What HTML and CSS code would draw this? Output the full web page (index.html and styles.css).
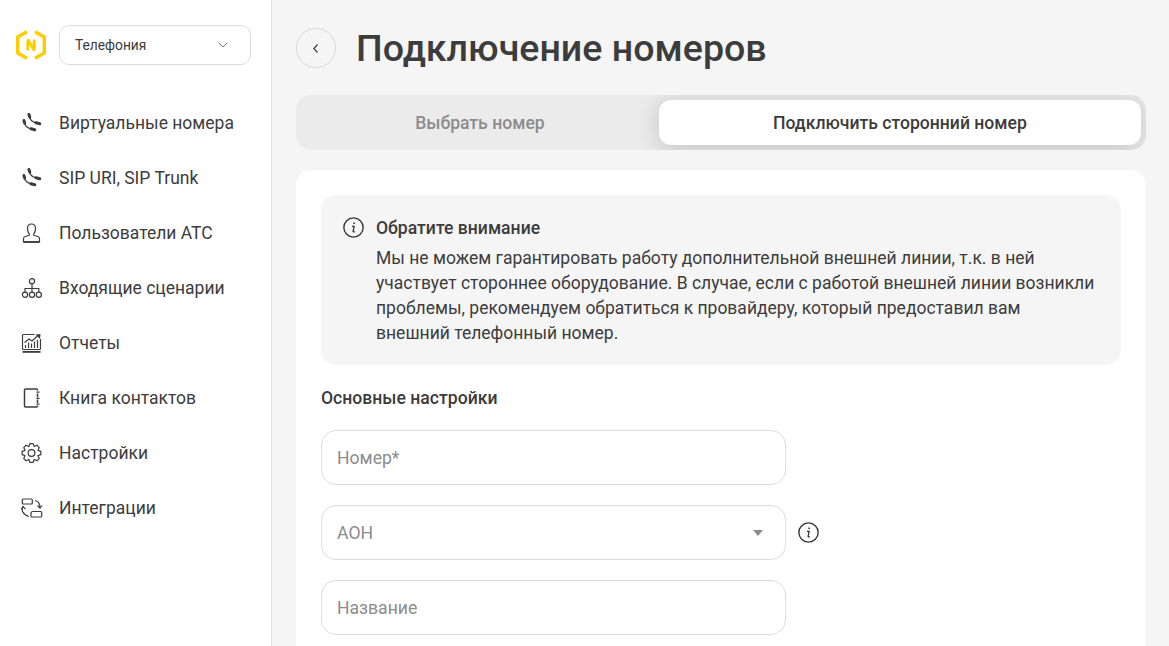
FILE: index.html
```html
<!DOCTYPE html>
<html lang="ru">
<head>
<meta charset="utf-8">
<title>Подключение номеров</title>
<link rel="stylesheet" href="styles.css">
</head>
<body>
<div class="app">
  <aside class="sidebar">
    <div class="brand">
      <svg class="logo" width="30" height="30" viewBox="0 0 30 30" fill="none">
        <path d="M11 1.700 1.700 7v16l9.300 5.300M19 1.700 28.300 7v16L19 28.300" stroke="#fc0" stroke-width="3.400" stroke-linejoin="round"/>
        <path d="M11.800 20.500v-11l6.400 11v-11" stroke="#fc0" stroke-width="2.800" stroke-linejoin="bevel"/>
      </svg>
      <div class="product">
        <span>Телефония</span>
        <svg width="10" height="6" viewBox="0 0 10 6" fill="none"><path d="M.7.7 5 5 9.300.7" stroke="#777" stroke-width="1"/></svg>
      </div>
    </div>
    <nav class="nav">
      <a class="nav-item">
        <svg class="ico" viewBox="0 0 20 20"><path class="phone-arc" d="M8 3.500C8.500 6.500 10.500 9 14.500 9.800M3 9.500c.5 3 2.500 5.500 6.500 6.300"/><path class="blob" d="m7.400 1.500.9 2.600M14.500 9.800l3.800 1M2.400 7.500l.8 2.600M9.500 15.800l3.800 1"/></svg>
        <span>Виртуальные номера</span>
      </a>
      <a class="nav-item">
        <svg class="ico" viewBox="0 0 20 20"><path class="phone-arc" d="M8 3.500C8.500 6.500 10.500 9 14.500 9.800M3 9.500c.5 3 2.500 5.500 6.500 6.300"/><path class="blob" d="m7.400 1.500.9 2.600M14.500 9.800l3.800 1M2.400 7.500l.8 2.600M9.500 15.800l3.800 1"/></svg>
        <span>SIP URI, SIP Trunk</span>
      </a>
      <a class="nav-item">
        <svg class="ico" viewBox="0 0 20 20"><path class="line" d="M2 19v-3.500c0-1 .7-1.700 1.800-2l3.400-1c.6-.2.800-.7.600-1.300C6.600 9.700 6 7.800 6 5.600 6 2.800 7.700 1 10 1s4 1.800 4 4.600c0 2.200-.6 4.100-1.800 5.600-.2.600 0 1.100.6 1.300l3.400 1c1.100.3 1.800 1 1.800 2V19z"/><path class="heavy" d="M2 19h16"/></svg>
        <span>Пользователи АТС</span>
      </a>
      <a class="nav-item">
        <svg class="ico" viewBox="0 0 20 20"><circle class="line" cx="10.500" cy="3.200" r="2.600"/><circle class="line" cx="3.500" cy="16.800" r="2.600"/><circle class="line" cx="10.500" cy="16.800" r="2.600"/><circle class="line" cx="17.300" cy="16.800" r="2.600"/><path class="line" d="M10.500 5.800v8.400M3.500 14.200v-3.700h13.800v3.700"/></svg>
        <span>Входящие сценарии</span>
      </a>
      <a class="nav-item">
        <svg class="ico" viewBox="0 0 20 20"><path class="line" d="M13 1.500H2c-.6 0-1 .4-1 1v13c0 .6.400 1 1 1h16c.6 0 1-.4 1-1V6"/><path class="heavy" d="M1 18.900h18"/><path class="line" d="M3 9.500 7.500 6l3 2L16.500 2.500"/><path class="solid" d="m14 1.500 5-.5-.5 5z"/><path class="line" d="M4 15v-3M7 15V9.500M10 15v-4.500M13 15V8.500M16 15V7"/></svg>
        <span>Отчеты</span>
      </a>
      <a class="nav-item">
        <svg class="ico" viewBox="0 0 20 20"><path class="heavy-line" d="M16 2.500V2c0-.6-.4-1-1-1H4c-.6 0-1 .4-1 1v16c0 .6.400 1 1 1h11c.6 0 1-.4 1-1v-.5M16 5.500v3.700M16 11.500v3.500"/><path class="line" d="M15 4.200h3M15 10.300h3M15 16.200h3"/></svg>
        <span>Книга контактов</span>
      </a>
      <a class="nav-item">
        <svg class="ico" viewBox="0 0 20 20"><circle class="line" cx="10" cy="10" r="3.400"/><path class="line round" d="M8.350.64h3.300l1.030 2.890 2.770-1.310 2.330 2.330-1.310 2.770 2.890 1.030v3.300l-2.890 1.030 1.310 2.770-2.330 2.330-2.770-1.310-1.030 2.890h-3.300l-1.030-2.890-2.770 1.310-2.330-2.330 1.310-2.770-2.890-1.030v-3.300l2.890-1.030-1.310-2.770 2.330-2.330 2.770 1.310z"/></svg>
        <span>Настройки</span>
      </a>
      <a class="nav-item">
        <svg class="ico ico-wide" viewBox="0 0 22 20"><path class="line" d="M2.800 1h8c.6 0 1 .4 1 1v3c0 .6-.4 1-1 1h-8c-.6 0-1-.4-1-1V2c0-.6.400-1 1-1zM12.500 13.500h7.700c.6 0 1 .4 1 1V18c0 .6-.4 1-1 1H11.500c-.6 0-1-.4-1-1v-2.500c0-1.100.9-2 2-2z"/><path class="line" d="M14.500 2.500c3 .8 5 3.300 5 7M2.500 8.500c-1.800 3.500-.7 8 5.800 10"/><path class="line" d="m.7 11.500 1.800-3 2.500 2.700M17 7.500l2.500 2.500L21.500 7.500"/></svg>
        <span>Интеграции</span>
      </a>
    </nav>
  </aside>
  <main class="main">
    <header class="page-head">
      <button class="back" type="button" aria-label="Назад">
        <svg width="5" height="9" viewBox="0 0 5 9" fill="none"><path d="M4.500.5.800 4.500l3.700 4" stroke="#3c3c3c" stroke-width="1.200"/></svg>
      </button>
      <h1>Подключение номеров</h1>
    </header>
    <div class="tabs">
      <div class="tab">Выбрать номер</div>
      <div class="tab tab-active">Подключить сторонний номер</div>
    </div>
    <section class="card">
      <div class="notice">
        <div class="notice-head">
          <svg class="info" viewBox="0 0 20 20" fill="none"><use href="#info-glyph"/></svg>
          <strong>Обратите внимание</strong>
        </div>
        <p>Мы не можем гарантировать работу дополнительной внешней линии, т.к. в ней<br>участвует стороннее оборудование. В случае, если с работой внешней линии возникли<br>проблемы, рекомендуем обратиться к провайдеру, который предоставил вам<br>внешний телефонный номер.</p>
      </div>
      <h2>Основные настройки</h2>
      <div class="form">
        <div class="row"><div class="field">Номер*</div></div>
        <div class="row">
          <div class="field field-select">АОН<i class="caret"></i></div>
          <svg class="info" viewBox="0 0 20 20" fill="none"><use href="#info-glyph"/></svg>
        </div>
        <div class="row"><div class="field">Название</div></div>
      </div>
    </section>
  </main>
</div>
<svg width="0" height="0" class="defs">
  <defs>
    <g id="info-glyph">
      <circle cx="10" cy="10" r="9.200" stroke="#333" stroke-width="1.300"/>
      <path d="M10.600 5.300v1.300" stroke="#333" stroke-width="1.500"/>
      <path d="M8.600 9h2l-1 4.600c-.1.700.7.800 1.600.1" stroke="#333" stroke-width="1.200" fill="none"/>
    </g>
  </defs>
</svg>
</body>
</html>
```

FILE: styles.css
```css
* { box-sizing: border-box; }
html, body { margin: 0; height: 100%; }
body { font-family: Roboto, "Noto Sans", sans-serif; color: #3c3c3c; background: #f5f5f5; overflow: hidden; }
.defs { position: absolute; }
.app { display: flex; height: 646px; overflow: hidden; }

.sidebar { flex: 0 0 272px; background: #fff; border-right: 1px solid #e2e2e2; padding: 25px 20px 0 16px; }
.brand { display: flex; align-items: center; gap: 13px; }
.logo { flex: none; }
.product { flex: 1; height: 40px; border: 1px solid #dcdcdc; border-radius: 10px; display: flex; align-items: center; justify-content: space-between; padding: 0 22px 0 15px; font-size: 13.750px; color: #3c3c3c; }

.nav { display: flex; flex-direction: column; margin-top: 30px; margin-left: -1px; }
.nav-item { display: flex; align-items: center; height: 55px; gap: 17px; padding-left: 6px; font-size: 17.500px; color: #3c3c3c; }
.ico { flex: none; width: 21px; height: 20px; fill: none; overflow: visible; }
.ico-wide { margin-left: -1px; margin-right: -1px; width: 23px; }
.line { fill: none; stroke: #3c3c3c; stroke-width: 1.200; }
.phone-arc { fill: none; stroke: #3c3c3c; stroke-width: 1.500; }
.heavy-line { fill: none; stroke: #3c3c3c; stroke-width: 1.500; }
.round { stroke-linejoin: round; }
.heavy { fill: none; stroke: #3c3c3c; stroke-width: 1.800; }
.solid { fill: #3c3c3c; stroke: none; }
.blob { fill: none; stroke: #3c3c3c; stroke-width: 3; stroke-linecap: round; }

.main { flex: 1; min-width: 0; padding: 28px 23px 0 24px; }
.page-head { display: flex; align-items: center; gap: 20px; height: 40px; }
.back { width: 40px; height: 40px; flex: none; border-radius: 50%; border: 1px solid #d8d8d8; background: transparent; padding: 0 1px 0 0; display: flex; align-items: center; justify-content: center; }
h1 { margin: 0; font-size: 37.600px; font-weight: 500; line-height: 40px; color: #3c3c3c; }

.tabs { margin-top: 27px; height: 55px; padding: 5px; background: #ebebeb; border-radius: 15px; display: flex; overflow: hidden; }
.tab { flex: 1 1 auto; display: flex; align-items: center; justify-content: center; border-radius: 12px; font-size: 17.600px; font-weight: 500; color: #8c8c8c; }
.tab-active { background: #fff; color: #3c3c3c; box-shadow: 0 3px 25px rgba(0, 0, 0, .18); }

.card { margin-top: 20px; background: #fff; border-radius: 15px; padding: 25px; min-height: 600px; }
.notice { background: #f5f5f5; border-radius: 15px; padding: 20px; height: 170px; }
.notice-head { display: flex; align-items: center; gap: 12px; height: 25px; margin-left: 2px; }
.info { flex: none; width: 21px; height: 21px; }
.notice-head strong { font-size: 17.600px; font-weight: 500; color: #3c3c3c; }
.notice p { margin: 6px 0 0 35px; font-size: 17.500px; line-height: 25px; color: #3c3c3c; white-space: nowrap; }
h2 { margin: 21px 0 0; font-size: 17.600px; font-weight: 500; line-height: 25px; color: #3c3c3c; }
.form { margin-top: 19px; display: flex; flex-direction: column; gap: 20px; }
.row { display: flex; align-items: center; gap: 12px; }
.field { width: 465px; height: 55px; flex: none; border: 1px solid #dcdcdc; border-radius: 15px; display: flex; align-items: center; justify-content: space-between; padding: 0 15px; font-size: 17.600px; color: #8c8c8c; background: #fff; }
.field-select { padding-right: 22px; }
.caret { width: 0; height: 0; border-left: 5px solid transparent; border-right: 5px solid transparent; border-top: 6px solid #8c8c8c; }
```
